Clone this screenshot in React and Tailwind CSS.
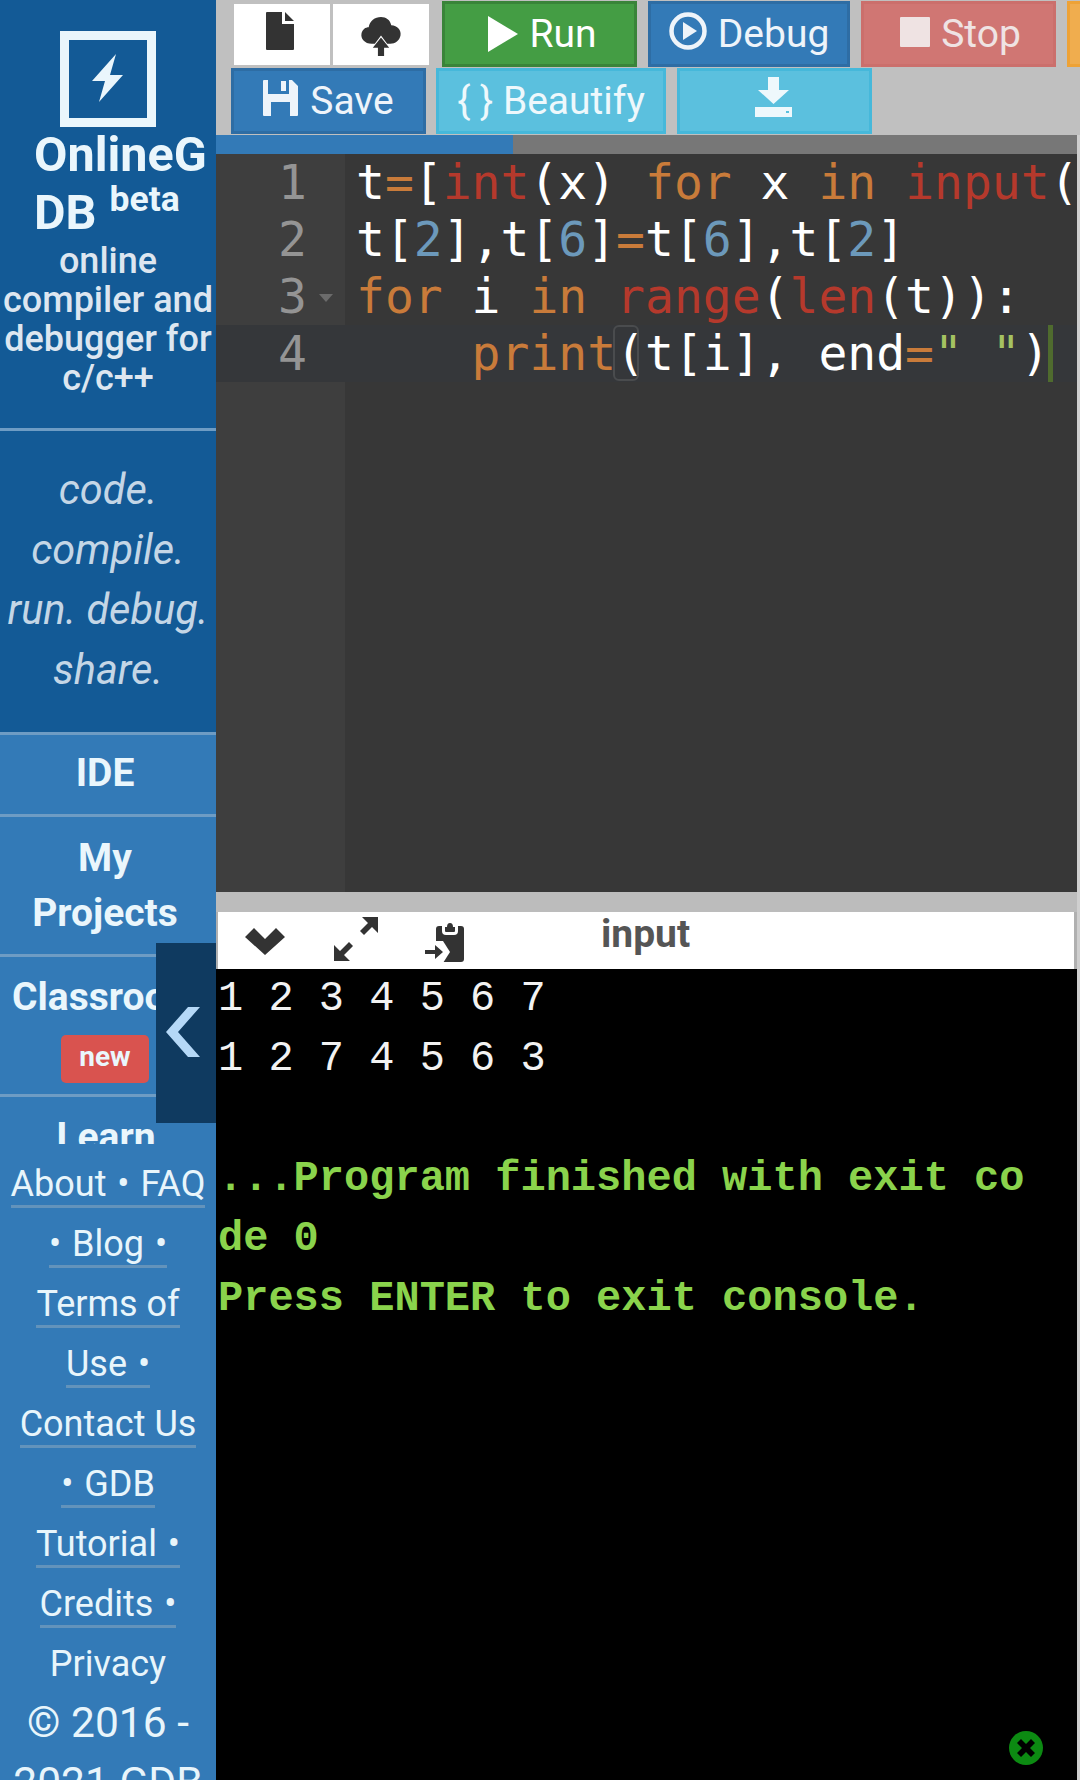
const F = { fontFamily: "Roboto, 'Noto Sans', sans-serif" };
const kw = "text-[#c97b3a]";
const fn = "text-[#b5392c]";
const num = "text-[#6c99bb]";

function Btn({ className, children }) {
  return (
    <div className={`h-[66px] flex items-center justify-center gap-[11px] text-[39px] border-[3px] shrink-0 ${className}`}>
      {children}
    </div>
  );
}

function Line({ n, active, fold, children }) {
  return (
    <div className={`flex h-[57px] ${active ? "bg-[#35373a]" : ""}`}>
      <div className={`relative w-[129px] shrink-0 pr-[38px] text-right text-[#949494] ${active ? "bg-[#35373a]" : "bg-[#3e3e3e]"}`}>
        {n}
        {fold && <span className="absolute left-[103px] top-[26px] w-0 h-0 border-x-[7px] border-x-transparent border-t-[8px] border-t-[#6b6b6b]" />}
      </div>
      <div className="pl-[11px] whitespace-pre text-white">{children}</div>
    </div>
  );
}

function Nav({ className = "", children }) {
  return <div className={`border-t-[3px] border-[#6e9cc4] text-center font-bold text-[39px] leading-[55px] text-[#eaf6fc] ${className}`}>{children}</div>;
}

function Foot({ children, plain, dot }) {
  return (
    <div className="h-[60px] text-center">
      <span className={`inline-block h-[51px] leading-[54px] ${dot ? "[word-spacing:2px]" : ""} ${plain ? "" : "border-b-[3px] border-[#6393bb]"}`}>{children}</span>
    </div>
  );
}

export default function App() {
  return (
    <div className="relative w-[1080px] h-[1780px] overflow-hidden flex bg-black" style={F}>
      <aside className="w-[216px] shrink-0 h-full flex flex-col bg-[#337ab7] overflow-hidden">
        <div className="bg-[#135a96] h-[732px] shrink-0 flex flex-col items-center">
          <div className="mt-[31px] w-[96px] h-[96px] border-[9px] border-[#eaf6fc] flex items-center justify-center">
            <svg width="32" height="50" viewBox="0 0 32 50">
              <path d="M24 0 L0 27 L13 27 L7 48 L31 21 L18 21 Z" fill="#eaf6fc" />
            </svg>
          </div>
          <div className="w-full pl-[34px] -mt-[1px] text-[48.5px] leading-[58px] font-bold text-[#eaf6fc] whitespace-nowrap">
            <div>OnlineG</div>
            <div>DB <span className="relative -top-[18px] left-[1px] text-[35.5px] leading-none">beta</span></div>
          </div>
          <div className="w-full text-center text-[36px] leading-[39px] font-medium text-[#dde6f0] whitespace-nowrap">
            <div>online</div>
            <div>compiler and</div>
            <div>debugger for</div>
            <div>c/c++</div>
          </div>
          <div className="w-full mt-[30px] h-[3px] bg-[#6e9cc4]" />
          <div className="w-full mt-[29px] text-center italic font-normal text-[41.5px] leading-[60px] text-[#c4d6e6] whitespace-nowrap">
            <div>code.</div>
            <div>compile.</div>
            <div>run. debug.</div>
            <div>share.</div>
          </div>
        </div>
        <div className="h-[412px] shrink-0 overflow-hidden">
          <Nav className="h-[82px] pt-[11px] pr-[6px]">IDE</Nav>
          <Nav className="h-[140px] pt-[14px] pr-[6px]"><div>My</div><div>Projects</div></Nav>
          <Nav className="h-[140px] pt-[13px] whitespace-nowrap pl-[12px] text-left">
            <div>Classroom</div>
            <div className="ml-[49px] mt-[10px] w-[88px] h-[48px] rounded-[5px] bg-[#d9534f] text-[28px] leading-[44px] text-center">new</div>
          </Nav>
          <Nav className="pt-[13px] pr-[4px]">Learn</Nav>
        </div>
        <div className="flex-1 pt-[13px] text-[36px] text-[#e8f5fb] whitespace-nowrap">
          <Foot dot>About • FAQ</Foot>
          <Foot dot>• Blog •</Foot>
          <Foot>Terms of</Foot>
          <Foot dot>Use •</Foot>
          <Foot>Contact Us</Foot>
          <Foot dot>• GDB</Foot>
          <Foot dot>Tutorial •</Foot>
          <Foot dot>Credits •</Foot>
          <Foot plain>Privacy</Foot>
          <div className="-mt-[4px] text-center text-[42.5px] leading-[60px]">
            <div>© 2016 -</div>
            <div>2021 GDB</div>
          </div>
        </div>
      </aside>

      <main className="flex-1 min-w-0 flex flex-col bg-[#cfcfcf] overflow-hidden">
        <div className="h-[135px] shrink-0 bg-[#c0c0c0] overflow-hidden">
          <div className="flex h-[68px] pt-[1px] w-[1000px]">
            <div className="ml-[18px] mt-[3px] w-[96px] h-[61px] bg-white flex items-start justify-center shrink-0">
              <svg width="30" height="40" viewBox="0 0 30 40" className="mt-[7px] -ml-[5px]"><path d="M1 2 Q1 1 2 1 H17 V13 H29 V38 Q29 39 28 39 H2 Q1 39 1 38 Z M20 1 L29 10 H20 Z" fill="#333" /></svg>
            </div>
            <div className="ml-[3px] mt-[3px] w-[96px] h-[61px] bg-white flex items-center justify-center shrink-0">
              <svg width="42" height="39" viewBox="0 0 40 38" className="mt-[3px]">
                <path d="M11 26 C4 26 0 21 1 16 C2 12 5 10 8 10 C9 4 14 0 20 0 C25 0 29 3 30 8 C36 8 40 13 39 18 C38 23 34 26 29 26 L26 26 L20 18 L14 26 Z" fill="#333" />
                <path d="M20 20 L28 30 H23 V38 H17 V30 H12 Z" fill="#333" />
              </svg>
            </div>
            <Btn className="ml-[13px] w-[195px] pl-[6px] bg-[#449d44] border-[#398439] text-white">
              <svg width="30" height="36" viewBox="0 0 30 36"><path d="M0 0 L30 18 L0 36 Z" fill="#fff" /></svg>
              <span>Run</span>
            </Btn>
            <Btn className="ml-[11px] w-[202px] bg-[#337ab7] border-[#2e6da4] text-[#eef4fa]">
              <svg width="38" height="38" viewBox="0 0 38 38" className="-mt-[6px]">
                <circle cx="19" cy="19" r="16.5" fill="none" stroke="#eef4fa" strokeWidth="4.5" />
                <path d="M14 10 L28 19 L14 28 Z" fill="#eef4fa" />
              </svg>
              <span>Debug</span>
            </Btn>
            <Btn className="ml-[11px] w-[195px] pl-[4px] bg-[#d07673] border-[#cb6f6c] text-[#efe3e3]">
              <div className="w-[30px] h-[30px] bg-[#efe3e3] rounded-[1px] -mt-[4px]" />
              <span>Stop</span>
            </Btn>
            <Btn className="ml-[11px] w-[195px] bg-[#f0ad4e] border-[#eea236]" />
          </div>
          <div className="flex h-[67px]">
            <Btn className="ml-[15px] w-[195px] bg-[#337ab7] border-[#2e6da4] text-[#eef4fa]">
              <svg width="37" height="38" viewBox="0 0 37 38" className="-mt-[6px] -ml-[1px]">
                <path d="M1 2 Q1 1 2 1 H6 V15 H27 V1 H30 L36 7 V36 Q36 37 35 37 H2 Q1 37 1 36 Z M9 23 V37 H28 V23 Z M19 2 H24 V12 H19 Z" fill="#eef4fa" fillRule="evenodd" />
              </svg>
              <span>Save</span>
            </Btn>
            <Btn className="ml-[10px] w-[230px] bg-[#5bc0de] border-[#46b8da] text-[#eef8fc]">
              <span>{"{ }"} Beautify</span>
            </Btn>
            <Btn className="ml-[11px] w-[195px] bg-[#5bc0de] border-[#46b8da]">
              <svg width="37" height="40" viewBox="0 0 37 40" className="-mt-[8px] -ml-[3px]">
                <path d="M13 0 H24 V13 H34 L18.5 27 L3 13 H13 Z" fill="#eef8fc" />
                <path d="M0 30 H37 V40 H0 Z M31 34 H34 V36 H31 Z" fill="#eef8fc" fillRule="evenodd" />
              </svg>
            </Btn>
          </div>
        </div>
        <div className="h-[19px] shrink-0 flex mr-[3px]">
          <div className="w-[297px] bg-[#337ab7]" />
          <div className="flex-1 bg-[#777777]" />
        </div>
        <div className="relative h-[738px] shrink-0 mr-[3px] bg-[#373737] overflow-hidden text-[48px] leading-[57px]" style={{ fontFamily: "'DejaVu Sans Mono', monospace" }}>
          <div className="absolute left-0 top-0 bottom-0 w-[129px] bg-[#3e3e3e]" />
          <div className="relative">
            <Line n="1">t<span className={kw}>=</span>[<span className={fn}>int</span>(x) <span className={kw}>for</span> x <span className={kw}>in</span> <span className={fn}>input</span>()</Line>
            <Line n="2">t[<span className={num}>2</span>],t[<span className={num}>6</span>]<span className={kw}>=</span>t[<span className={num}>6</span>],t[<span className={num}>2</span>]</Line>
            <Line n="3" fold><span className={kw}>for</span> i <span className={kw}>in</span> <span className={fn}>range</span>(<span className={fn}>len</span>(t)):</Line>
            <Line n="4" active>{"    "}<span className={kw}>print</span>(t[i], end<span className={kw}>=</span><span className="text-[#a5c261]">" "</span>)</Line>
          </div>
          <div className="absolute left-[397px] top-[171px] w-[26px] h-[56px] border-[2px] border-[#4a4c4e] rounded-[6px]" />
          <div className="absolute left-[832px] top-[171px] w-[5px] h-[57px] bg-[#4f6b2e]" />
        </div>
        <div className="h-[20px] shrink-0 mr-[3px] bg-[#bcbcbc]" />
        <div className="h-[57px] shrink-0 mr-[3px] pl-[2px] bg-[#b0b0b0] flex">
          <div className="relative flex-1 mr-[3px] bg-white flex items-start text-[#333333]">
            <svg width="40" height="28" viewBox="0 0 40 28" className="ml-[27px] mt-[15px] shrink-0">
              <path d="M0 10 L9 1 L20 12 L31 1 L40 10 L20 28 Z" fill="#333" />
            </svg>
            <svg width="44" height="44" viewBox="0 0 44 44" className="ml-[49px] mt-[5px] shrink-0">
              <path d="M28 0 H44 V16 L38 10 L30 18 L26 14 L34 6 Z M0 44 V28 L6 34 L15 25 L19 29 L10 38 L16 44 Z" fill="#333" />
            </svg>
            <svg width="40" height="40" viewBox="0 0 40 40" className="ml-[47px] mt-[11px] shrink-0">
              <rect x="11" y="3" width="28" height="36" rx="3" fill="#333" />
              <path d="M17 3 H33 V8 Q33 12 29 12 H21 Q17 12 17 8 Z" fill="#fff" />
              <path d="M20 4 H22 Q22 0 25 0 Q28 0 28 4 H30 V8 Q30 9 29 9 H21 Q20 9 20 8 Z" fill="#333" />
              <path d="M8 18 H18 L25 29 L18 40 H8 Z" fill="#fff" />
              <path d="M0 27 H10 V22 L18 29 L10 36 V31 H0 Z" fill="#333" />
            </svg>
            <div className="absolute left-[383px] top-0 text-[39px] leading-[44px] font-bold text-[#555555]">input</div>
          </div>
        </div>
        <div className="flex-1 mr-[3px] bg-black pl-[2px] text-[42px] leading-[60px] whitespace-pre" style={{ fontFamily: "'Liberation Mono', monospace" }}>
          <div className="text-[#f2f2f2] font-normal">1 2 3 4 5 6 7</div>
          <div className="text-[#f2f2f2] font-normal">1 2 7 4 5 6 3</div>
          <div className="h-[60px]" />
          <div className="font-bold text-[#8ad34c]">...Program finished with exit co</div>
          <div className="font-bold text-[#8ad34c]">de 0</div>
          <div className="font-bold text-[#8ad34c]">Press ENTER to exit console.</div>
        </div>
      </main>

      <div className="absolute left-[156px] top-[943px] w-[60px] h-[180px] bg-[#0f3a60] flex items-center justify-center">
        <svg width="34" height="50" viewBox="0 0 34 50" className="-ml-[6px] -mt-[3px]"><path d="M22 0 H34 L12 25 L34 50 H22 L0 25 Z" fill="#b5d8f7" /></svg>
      </div>
      <div className="absolute right-[37px] bottom-[15px] w-[34px] h-[34px] rounded-full bg-[#0c8a12] flex items-center justify-center">
        <svg width="20" height="20" viewBox="0 0 20 20"><path d="M5 1 L10 6 L15 1 L19 5 L14 10 L19 15 L15 19 L10 14 L5 19 L1 15 L6 10 L1 5 Z" fill="#000" /></svg>
      </div>
    </div>
  );
}
